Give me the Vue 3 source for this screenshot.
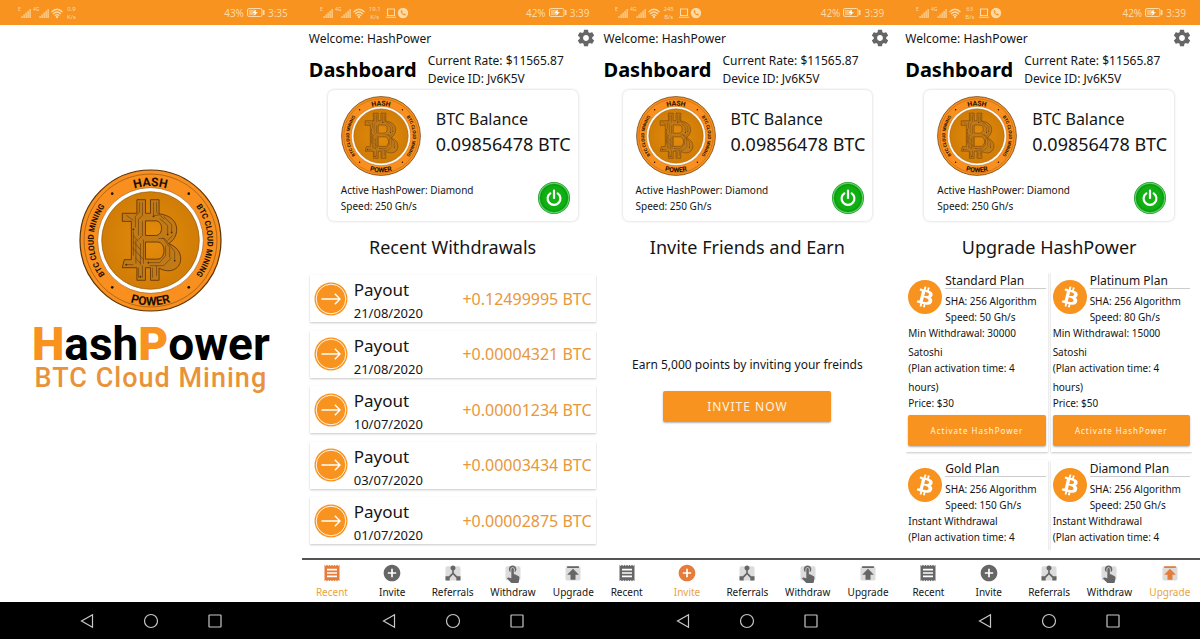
<template>
  <svg class="sprite" aria-hidden="true">
    <defs>
      <radialGradient id="disc" cx="50%" cy="50%" r="50%">
        <stop offset="0" stop-color="#e48c0c" />
        <stop offset="1" stop-color="#d07c06" />
      </radialGradient>
      <radialGradient id="green" cx="50%" cy="50%" r="50%">
        <stop offset="0" stop-color="#14b514" />
        <stop offset="0.72" stop-color="#0fae12" />
        <stop offset="0.84" stop-color="#0a9a10" />
        <stop offset="0.92" stop-color="#5fd867" />
        <stop offset="1" stop-color="#0b8d12" />
      </radialGradient>
      <path id="arc-top" d="M17 71 A54 54 0 0 1 125 71" />
      <path id="arc-bottom" d="M6.5 71 A64.5 64.5 0 0 0 135.5 71" />
      <path id="arc-left" d="M71 127.5 A56.5 56.5 0 0 1 71 14.5" />
      <path id="arc-right" d="M71 14.5 A56.5 56.5 0 0 1 71 127.5" />
    </defs>
    <symbol id="coin" viewBox="0 0 142 142">
      <circle cx="71" cy="71" r="70" fill="#f88f1e" stroke="#5a3206" stroke-width="1.2" />
      <circle cx="71" cy="71" r="66" fill="none" stroke="#9a560c" stroke-width="0.7" />
      <circle cx="71" cy="71" r="52.5" fill="#fff" stroke="#9a560c" stroke-width="0.6" />
      <circle cx="71" cy="71" r="48.5" fill="url(#disc)" stroke="#8a5208" stroke-width="0.6" />
      <g font-family="'Liberation Sans Narrow', Roboto, sans-serif" font-weight="700" fill="#1c1003" text-anchor="middle">
        <text font-size="12"><textPath href="#arc-top" startOffset="50%">HASH</textPath></text>
        <text font-size="12"><textPath href="#arc-bottom" startOffset="50%">POWER</textPath></text>
        <text font-size="8"><textPath href="#arc-left" startOffset="50%">BTC CLOUD MINING</textPath></text>
        <text font-size="8"><textPath href="#arc-right" startOffset="50%">BTC CLOUD MINING</textPath></text>
      </g>
      <g fill="#1c1003">
        <circle cx="33" cy="24.5" r="1.3" />
        <circle cx="109" cy="24.5" r="1.3" />
        <circle cx="33" cy="117.5" r="1.3" />
        <circle cx="109" cy="117.5" r="1.3" />
      </g>
      <path
        d="M43 44H57.5V30.5H66V44H71V30.5H79.5V44.5C91 46 97 52 97 60C97 66 94 71 89 74C97 77 101 83 101 89C101 98 92 105 79.5 98.5V110.5H71V98H66V110.5H57.5V98H43L45 90H52V52H43ZM66 51.5V66H76C84 66 84 51.5 76 51.5ZM66 72.5V89.5H78C86.5 89.5 86.5 72.5 78 72.5Z"
        fill="#c27a17" fill-rule="evenodd" stroke="#653708" stroke-width="0.9" stroke-linejoin="round"
      />
      <g fill="none" stroke="#5d3a12" stroke-width="0.6">
        <path d="M60 33V43L56 47V58M63 33V46L59 50V66M54 62V86M56.5 70V94M59 70L63 66V52M61 74V95M64 70V94M59 98V108M63 96V108M74 33V46H79M77 33V43L85 50M73 98V108M77 96V106M80 49L88 56V64M84 47L92 55V62M83 68L90 78V88M79 69H85L95 82V90M86 76V86L80 93H70M92 88L84 96H70M47 46L54 51M46 95H54M93 66L88 71" />
        <path d="M54 66L59 72M54 72L61 80M53 78L64 90M56 88L61 94" />
      </g>
      <g fill="#4c2b08">
        <circle cx="74" cy="47" r="0.9" /><circle cx="88" cy="65" r="0.9" />
        <circle cx="92" cy="63" r="0.9" /><circle cx="95" cy="91" r="0.9" />
        <circle cx="69" cy="93" r="0.9" /><circle cx="54" cy="60" r="0.9" />
        <circle cx="47" cy="95" r="0.9" /><circle cx="61" cy="107" r="0.9" />
      </g>
    </symbol>
  </svg>

  <div class="screens">
    <section v-for="screen in screens" :key="screen.id" class="phone" :class="{ lapped: screen.id === 'invite' }">
      <header class="status">
        <svg class="signals" viewBox="0 0 46 16" aria-hidden="true">
          <g fill="currentColor">
            <rect v-for="n in 5" :key="'a' + n" :x="1.5 + n * 2" :y="13 - n * 1.8" width="1.2" :height="n * 1.8" />
            <rect v-for="n in 5" :key="'b' + n" :x="19.5 + n * 2" :y="13 - n * 1.8" width="1.2" :height="n * 1.8" />
            <text x="0" y="6" font-size="5">E</text>
            <text x="15" y="6" font-size="5">4G</text>
            <circle cx="39" cy="12" r="1.2" />
          </g>
          <g fill="none" stroke="currentColor" stroke-width="1.2">
            <path d="M33.5 7Q39 1.5 44.5 7M35 9Q39 5 43 9M36.8 10.8Q39 8.5 41.2 10.8" />
          </g>
        </svg>
        <span class="speed">{{ screen.net }}<br />{{ screen.unit }}</span>
        <svg v-if="screen.title" class="extras" viewBox="0 0 23 12" aria-hidden="true">
          <path d="M1.5 2H8.5V8.5H1.5ZM0 10.3H10" fill="none" stroke="currentColor" stroke-width="1.1" />
          <circle cx="17" cy="6" r="5.2" fill="currentColor" />
          <path d="M14.8 3.5C14.5 6 16.5 8.5 19.5 8.4L19.8 7.2L18.3 6.5L17.7 7.1C16.9 6.7 16.4 6.1 16.1 5.4L16.6 4.8L16 3.3Z" fill="#f7931e" />
        </svg>
        <span class="charge">{{ screen.charge }}</span>
        <svg class="battery" viewBox="0 0 18 9" aria-hidden="true">
          <rect x="0.5" y="0.5" width="14.5" height="8" rx="1.5" fill="none" stroke="currentColor" />
          <rect x="1.8" y="1.8" width="7" height="5.4" fill="currentColor" opacity="0.6" />
          <path d="M9 1.5L5.5 5H8L6.5 7.8L11 4.2H8.5Z" fill="#fff" />
          <rect x="16" y="2" width="1.5" height="5" fill="currentColor" />
        </svg>
        <span>{{ screen.time }}</span>
      </header>

      <main v-if="!screen.title" class="intro">
        <svg class="intro-coin" role="img" aria-label="HashPower coin"><use href="#coin" /></svg>
        <h1><b>H</b>ash<b>P</b>ower</h1>
        <p>BTC Cloud Mining</p>
      </main>

      <template v-else>
        <div class="welcome">
          <span>Welcome: HashPower</span>
          <button type="button" class="plain" aria-label="Settings">
            <svg class="gear" viewBox="0 0 24 24"><path :d="gear" fill="#666" /></svg>
          </button>
        </div>
        <div class="heading">
          <h2>Dashboard</h2>
          <p>Current Rate: $11565.87<br />Device ID: Jv6K5V</p>
        </div>
        <div class="balance">
          <div class="balance-top">
            <svg class="coin" aria-hidden="true"><use href="#coin" /></svg>
            <div class="figures">
              <p class="label">BTC Balance</p>
              <p class="value">0.09856478 BTC</p>
            </div>
          </div>
          <div class="balance-bottom">
            <p>Active HashPower: Diamond<br />Speed: 250 Gh/s</p>
            <button type="button" class="plain" aria-label="Power">
              <svg class="power" viewBox="0 0 32 32">
                <circle cx="16" cy="16" r="16" fill="url(#green)" />
                <path d="M12.3 11.3A6.4 6.4 0 1 0 19.7 11.3M16 8.5V16" fill="none" stroke="#fff" stroke-width="2.2" stroke-linecap="round" />
              </svg>
            </button>
          </div>
        </div>
        <h3>{{ screen.title }}</h3>

        <main v-if="screen.id === 'recent'" class="content payouts">
          <article v-for="(payout, i) in payouts" :key="i" class="payout">
            <svg class="arrow" viewBox="0 0 34 34" aria-hidden="true">
              <circle cx="17" cy="17" r="16.5" fill="#f7931e" />
              <circle cx="17" cy="17" r="14.8" fill="none" stroke="#fff" stroke-width="0.9" />
              <path d="M7.5 17H26M20.8 11.8L26 17L20.8 22.2" fill="none" stroke="#fff" stroke-width="1.4" />
            </svg>
            <div class="payout-text">
              <strong>Payout</strong>
              <time>{{ payout.date }}</time>
            </div>
            <span class="amount">{{ payout.amount }}</span>
          </article>
        </main>

        <main v-else-if="screen.id === 'invite'" class="content invitation">
          <p>Earn 5,000 points by inviting your freinds</p>
          <button type="button" class="action">INVITE NOW</button>
        </main>

        <main v-else class="content plans">
          <article v-for="plan in plans" :key="plan.name" class="plan">
            <div class="plan-head">
              <svg class="btc" viewBox="0 0 32 32" aria-hidden="true">
                <circle cx="16" cy="16" r="16" fill="#f7931e" />
                <path :d="bitcoin" fill="#fff" />
              </svg>
              <div class="plan-title">
                <h4>{{ plan.name }}</h4>
                <p>SHA: 256 Algorithm</p>
                <p>Speed: {{ plan.speed }} Gh/s</p>
              </div>
            </div>
            <div class="terms">
              <p>{{ plan.withdrawal }}</p>
              <p>(Plan activation time: 4 hours)</p>
              <p v-if="plan.price">Price: {{ plan.price }}</p>
            </div>
            <button v-if="plan.price" type="button" class="action small">Activate HashPower</button>
          </article>
        </main>

        <nav class="tabs">
          <button v-for="tab in tabs" :key="tab.id" type="button" class="tab" :class="{ active: tab.id === screen.id }">
            <svg viewBox="0 0 24 24" aria-hidden="true">
              <rect v-if="tab.shade" x="3" y="4" width="18" height="17" rx="2" class="shade" />
              <path :d="tab.icon" fill="currentColor" />
            </svg>
            <span>{{ tab.label }}</span>
          </button>
        </nav>
      </template>

      <footer class="system">
        <button type="button" class="plain" aria-label="Back">
          <svg viewBox="0 0 16 16"><path d="M13.5 1.8V14.2L2.5 8Z" /></svg>
        </button>
        <button type="button" class="plain" aria-label="Home">
          <svg viewBox="0 0 16 16"><circle cx="8" cy="8" r="6.5" /></svg>
        </button>
        <button type="button" class="plain" aria-label="Overview">
          <svg viewBox="0 0 16 16"><rect x="2" y="2" width="12" height="12" rx="0.5" /></svg>
        </button>
      </footer>
    </section>
  </div>
</template>

<script setup>
// An empty title means the splash screen
const screens = [
  { id: 'splash', net: '0.9', unit: 'K/s', charge: '43%', time: '3:35', title: '' },
  { id: 'recent', net: '19.1', unit: 'K/s', charge: '42%', time: '3:39', title: 'Recent Withdrawals' },
  { id: 'invite', net: '245', unit: 'B/s', charge: '42%', time: '3:39', title: 'Invite Friends and Earn' },
  { id: 'upgrade', net: '63', unit: 'B/s', charge: '42%', time: '3:39', title: 'Upgrade HashPower' }
]

const payouts = [
  { date: '21/08/2020', amount: '+0.12499995 BTC' },
  { date: '21/08/2020', amount: '+0.00004321 BTC' },
  { date: '10/07/2020', amount: '+0.00001234 BTC' },
  { date: '03/07/2020', amount: '+0.00003434 BTC' },
  { date: '01/07/2020', amount: '+0.00002875 BTC' }
]

const plans = [
  { name: 'Standard Plan', speed: 50, withdrawal: 'Min Withdrawal: 30000 Satoshi', price: '$30' },
  { name: 'Platinum Plan', speed: 80, withdrawal: 'Min Withdrawal: 15000 Satoshi', price: '$50' },
  { name: 'Gold Plan', speed: 150, withdrawal: 'Instant Withdrawal' },
  { name: 'Diamond Plan', speed: 250, withdrawal: 'Instant Withdrawal' }
]

const tabs = [
  {
    id: 'recent',
    label: 'Recent',
    icon: 'M18 17H6v-2h12v2zm0-4H6v-2h12v2zm0-4H6V7h12v2zM3 22l1.5-1.5L6 22l1.5-1.5L9 22l1.5-1.5L12 22l1.5-1.5L15 22l1.5-1.5L18 22l1.5-1.5L21 22V2l-1.5 1.5L18 2l-1.5 1.5L15 2l-1.5 1.5L12 2l-1.5 1.5L9 2 7.5 3.5 6 2 4.5 3.5 3 2v20z'
  },
  {
    id: 'invite',
    label: 'Invite',
    icon: 'M12 2C6.48 2 2 6.48 2 12s4.48 10 10 10 10-4.48 10-10S17.52 2 12 2zm5 11h-4v4h-2v-4H7v-2h4V7h2v4h4v2z'
  },
  {
    id: 'referrals',
    label: 'Referrals',
    shade: true,
    icon: 'M17 16l-4-4V8.82C14.16 8.4 15 7.3 15 6c0-1.66-1.34-3-3-3S9 4.34 9 6c0 1.3.84 2.4 2 2.82V12l-4 4H3v5h5v-3.05l4-4.2 4 4.2V21h5v-5h-4z'
  },
  {
    id: 'withdraw',
    label: 'Withdraw',
    shade: true,
    icon: 'M9 11.24V7.5C9 6.12 10.12 5 11.5 5S14 6.12 14 7.5v3.74c1.21-.81 2-2.18 2-3.74C16 5.01 13.99 3 11.5 3S7 5.01 7 7.5c0 1.56.79 2.93 2 3.74zm9.84 4.63l-4.54-2.26c-.17-.07-.35-.11-.54-.11H13v-6c0-.83-.67-1.5-1.5-1.5S10 6.67 10 7.5v10.74l-3.43-.72c-.08-.01-.15-.03-.24-.03-.31 0-.59.13-.79.33l-.79.8 4.94 4.94c.27.27.65.44 1.06.44h6.79c.75 0 1.33-.55 1.44-1.28l.75-5.27c.01-.07.02-.14.02-.2 0-.62-.38-1.16-.91-1.38z'
  },
  {
    id: 'upgrade',
    label: 'Upgrade',
    shade: true,
    icon: 'M5 4v2h14V4H5zm0 10h4v6h6v-6h4l-7-7-7 7z'
  }
]

const gear =
  'M19.43 12.98c.04-.32.07-.64.07-.98s-.03-.66-.07-.98l2.11-1.65c.19-.15.24-.42.12-.64l-2-3.46c-.12-.22-.39-.3-.61-.22l-2.49 1c-.52-.4-1.08-.73-1.69-.98l-.38-2.65C14.46 2.18 14.25 2 14 2h-4c-.25 0-.46.18-.49.42l-.38 2.65c-.61.25-1.17.59-1.69.98l-2.49-1c-.23-.09-.49 0-.61.22l-2 3.46c-.13.22-.07.49.12.64l2.11 1.65c-.04.32-.07.65-.07.98s.03.66.07.98l-2.11 1.65c-.19.15-.24.42-.12.64l2 3.46c.12.22.39.3.61.22l2.49-1c.52.4 1.08.73 1.69.98l.38 2.65c.03.24.24.42.49.42h4c.25 0 .46-.18.49-.42l.38-2.65c.61-.25 1.17-.59 1.69-.98l2.49 1c.23.09.49 0 .61-.22l2-3.46c.12-.22.07-.49-.12-.64l-2.11-1.65zM12 15.5c-1.93 0-3.5-1.57-3.5-3.5s1.57-3.5 3.5-3.5 3.5 1.57 3.5 3.5-1.57 3.5-3.5 3.5z'

const bitcoin =
  'M23.189 14.02c.314-2.096-1.283-3.223-3.465-3.975l.708-2.84-1.728-.43-.69 2.765c-.454-.114-.92-.22-1.385-.326l.695-2.783L15.596 6l-.708 2.839c-.376-.086-.746-.17-1.104-.26l.002-.009-2.384-.595-.46 1.846s1.283.294 1.256.312c.7.175.826.638.805 1.006l-.806 3.235c.048.012.11.03.18.057l-.183-.045-1.13 4.532c-.086.212-.303.531-.793.41.018.025-1.256-.313-1.256-.313l-.858 1.978 2.25.561c.418.105.828.215 1.231.318l-.715 2.872 1.727.43.708-2.84c.472.127.93.245 1.378.357l-.706 2.828 1.728.43.715-2.866c2.948.558 5.164.333 6.097-2.333.752-2.146-.037-3.385-1.588-4.192 1.13-.26 1.98-1.003 2.207-2.538zm-3.95 5.538c-.533 2.147-4.148.986-5.32.695l.95-3.805c1.172.293 4.929.872 4.37 3.11zm.535-5.569c-.487 1.953-3.495.96-4.47.717l.86-3.45c.975.243 4.118.696 3.61 2.733z'
</script>

<style>
body {
  margin: 0;
  background: #fff;
}
</style>

<style scoped>
.sprite {
  position: absolute;
  width: 0;
  height: 0;
}

.screens {
  display: flex;
  height: 100vh;
  overflow: hidden;
  font-family: 'Noto Sans', sans-serif;
  font-size: 12px;
  color: #151515;
}

.phone {
  position: relative;
  display: flex;
  flex-direction: column;
  flex: 1 1 0;
  min-width: 0;
  background: #fff;
}

/* the third screen laps over the second */
.lapped {
  margin-left: -7px;
}

h1,
h2,
h3,
h4,
p {
  margin: 0;
  font-weight: 400;
}

svg {
  display: block;
  flex: none;
}

button {
  font-family: inherit;
  border: none;
  cursor: pointer;
}

.plain {
  padding: 0;
  background: none;
}

.status {
  display: flex;
  align-items: center;
  flex: none;
  height: 25px;
  padding: 0 14px 0 18px;
  background: #f7931e;
  color: #fdd9a6;
  font-size: 10px;
}

.signals {
  width: 46px;
  height: 16px;
}

.speed {
  margin: 0 5px 0 3px;
  font-size: 6px;
  line-height: 8px;
  text-align: center;
}

.extras {
  width: 23px;
  height: 12px;
}

.charge {
  margin-left: auto;
}

.battery {
  width: 18px;
  height: 9px;
  margin: 0 3px;
}

.intro {
  flex: 1;
  display: flex;
  flex-direction: column;
  align-items: center;
  padding-top: 144px;
  font-family: Roboto, sans-serif;
}

.intro-coin {
  width: 143px;
  height: 143px;
}

.intro h1 {
  margin-top: 8px;
  font-size: 46px;
  line-height: 48px;
  font-weight: 700;
  color: #000;
}

.intro b {
  color: #f7931e;
}

.intro p {
  font-size: 27px;
  line-height: 20px;
  font-weight: 500;
  letter-spacing: 1px;
  color: #e8933a;
}

.welcome {
  display: flex;
  align-items: center;
  justify-content: space-between;
  flex: none;
  height: 26px;
  padding: 0 8px 0 7px;
}

.gear {
  width: 20px;
  height: 20px;
}

.heading {
  display: flex;
  align-items: center;
  gap: 11px;
  flex: none;
  height: 38px;
  padding: 0 7px;
  line-height: 18px;
}

.heading h2 {
  font-size: 20px;
  font-weight: 700;
  color: #000;
}

.balance {
  display: flex;
  flex-direction: column;
  justify-content: space-between;
  flex: none;
  box-sizing: border-box;
  height: 131px;
  margin: 1px 26px 0;
  padding: 6px 8px 7px 13px;
  border-radius: 6px;
  box-shadow: 0 0 3px rgba(0, 0, 0, 0.2);
}

.balance-top {
  display: flex;
  align-items: center;
  gap: 15px;
  white-space: nowrap;
}

.figures {
  padding-bottom: 8px;
}

.coin {
  width: 80px;
  height: 80px;
}

.label {
  font-size: 16px;
  line-height: 25px;
}

.value {
  font-size: 18px;
  line-height: 25px;
}

.balance-bottom {
  display: flex;
  align-items: center;
  justify-content: space-between;
  font-size: 10px;
  line-height: 16px;
}

.power {
  width: 32px;
  height: 32px;
}

h3 {
  flex: none;
  padding-top: 12px;
  font-size: 18px;
  line-height: 28px;
  text-align: center;
}

.content {
  flex: 1;
  min-height: 0;
  margin: 11px 8px 8px;
}

.payouts {
  display: flex;
  flex-direction: column;
  justify-content: space-between;
  margin: 14px 8px;
}

.payout {
  display: flex;
  align-items: center;
  box-sizing: border-box;
  height: 47px;
  padding: 0 4px;
  box-shadow: 0 1px 2px rgba(0, 0, 0, 0.22);
}

.arrow {
  width: 34px;
  height: 34px;
}

.payout-text {
  display: flex;
  flex-direction: column;
  margin-left: 6px;
  padding-top: 9px;
}

.payout-text strong {
  font-size: 17px;
  line-height: 20px;
  font-weight: 400;
}

.payout-text time {
  font-size: 13px;
  line-height: 26px;
}

.amount {
  margin-left: auto;
  font-size: 16px;
  color: #e8973a;
}

.invitation {
  display: flex;
  flex-direction: column;
  align-items: center;
  padding-top: 84px;
}

.action {
  width: 168px;
  height: 31px;
  margin-top: 18px;
  padding: 0;
  border-radius: 2px;
  background: #f7931e;
  box-shadow: 0 1px 2px rgba(0, 0, 0, 0.3);
  color: #fff3e0;
  font-size: 12px;
  letter-spacing: 1px;
}

.action.small {
  width: 100%;
  margin-top: 5px;
  font-size: 8px;
}

.plans {
  display: grid;
  grid-template-columns: 1fr 1fr;
  align-content: start;
  gap: 8px 3px;
  overflow: hidden;
}

.plan {
  box-sizing: border-box;
  padding: 1px 2px 6px;
  font-size: 10px;
  line-height: 19px;
  box-shadow: 0 1px 2px rgba(0, 0, 0, 0.22);
}

.plan-head {
  display: flex;
  gap: 3px;
}

.btc {
  width: 34px;
  height: 34px;
  margin-top: 7px;
}

.plan-title {
  flex: 1;
  min-width: 0;
}

.plan h4 {
  margin-bottom: 3px;
  font-size: 12px;
  line-height: 15px;
  border-bottom: 1px solid #ccc;
}

.plan p {
  margin-bottom: -3px;
}

.terms {
  padding-right: 8px;
}

.tabs {
  display: grid;
  grid-template-columns: repeat(5, 1fr);
  flex: none;
  height: 42px;
  border-top: 2px solid #555;
}

.tab {
  display: flex;
  flex-direction: column;
  align-items: center;
  padding: 3px 0 0;
  background: none;
  color: #666;
  font-size: 10px;
  line-height: 18px;
}

.tab svg {
  width: 20px;
  height: 20px;
}

.tab span {
  color: #151515;
}

.tab .shade {
  fill: #dcdcdc;
}

.tab.active {
  color: #e57c3a;
}

.tab.active span {
  color: #eaa43c;
}

.system {
  display: flex;
  align-items: center;
  justify-content: center;
  gap: 48px;
  flex: none;
  height: 37px;
  background: #000;
}

.system svg {
  width: 16px;
  height: 16px;
  fill: none;
  stroke: #c8c8c8;
  stroke-width: 1.2;
}
</style>
